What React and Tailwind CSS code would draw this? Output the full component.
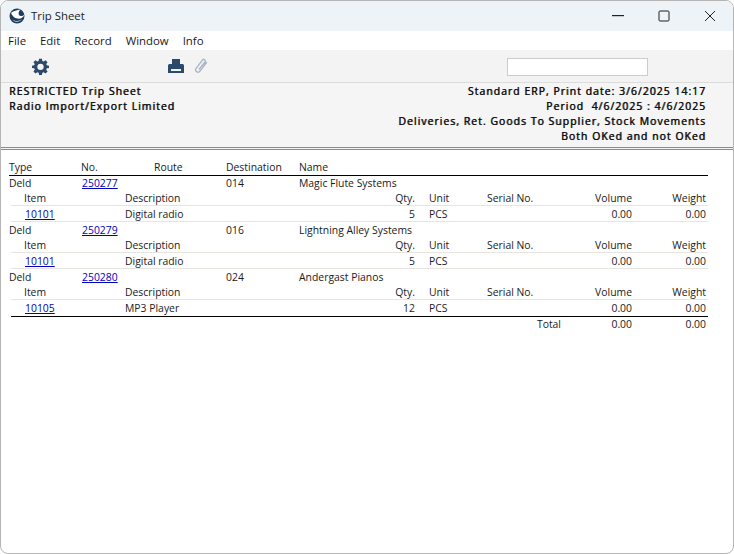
const F = { fontFamily: '"Open Sans", Tahoma, sans-serif' };

function Gear() {
  return (
    <svg width="17" height="17" viewBox="0 0 24 24" fill="#2b4a6b">
      <path fillRule="evenodd" d="M10 1h4l.6 3.1 1.9.8L19.1 3 22 5.900l-1.900 2.600.8 1.900L24 11v3l-3.100.6-.8 1.900 1.900 2.600L19.100 22l-2.600-1.900-1.900.8L14 24h-4l-.6-3.100-1.900-.8L4.900 22 2 19.100l1.900-2.600-.8-1.900L0 14v-3l3.100-.6.8-1.900L2 5.900 4.900 3l2.600 1.900 1.900-.8L10 1zm2 7a4.500 4.500 0 1 0 0 9 4.500 4.500 0 0 0 0-9z" />
    </svg>
  );
}

function Printer() {
  return (
    <svg width="16" height="15" viewBox="0 0 16 15" fill="#2b4a6b">
      <path d="M4 0h8v5H4z" />
      <path fillRule="evenodd" d="M1.500 5h13A1.500 1.500 0 0 1 16 6.500V14H0V6.500A1.500 1.500 0 0 1 1.500 5zM3 10v2h10v-2H3z" />
    </svg>
  );
}

function Clip() {
  return (
    <svg width="14" height="16" viewBox="0 0 14 16" fill="none" stroke="#aab5c4" strokeWidth="1.400" strokeLinecap="round">
      <path d="M12.500 4.500 6 13.200a2.400 2.400 0 0 1-3.900-2.800l6.300-8.300a1.600 1.600 0 0 1 2.600 1.900L5.300 11" />
    </svg>
  );
}

function Logo() {
  return (
    <svg width="16" height="16" viewBox="0 0 16 16">
      <circle cx="8" cy="8" r="7.500" fill="#1f3d5c" />
      <path d="M2 5C4.500 2.800 8 2.200 11.500 1.500 9.500 3.500 8.800 6 10.500 7.500c1.500 1 3.300.7 4.800-.7-.6 2.700-3.700 4.500-7 3.800C5.500 10 3.200 8 2 5z" fill="#ffffff" />
      <path d="M3 11.500c3 2 7 2 10-.2-2 3-7 3.500-10 .2z" fill="#c9d6e2" />
    </svg>
  );
}

function L({ children }) {
  return <span className="text-[#0000c0] underline">{children}</span>;
}

function Head({ a, b, c, d, e, link }) {
  return (
    <div className="grid h-[15.67px] grid-cols-[72px_73px_72px_73px_1fr] items-center whitespace-nowrap">
      <div>{a}</div>
      <div className={link ? "pl-px" : ""}>{link ? <L>{b}</L> : b}</div>
      <div>{c}</div>
      <div>{d}</div>
      <div>{e}</div>
    </div>
  );
}

function Line({ a, b, c, d, e, f, g, link, noBorder }) {
  return (
    <div className={`ml-[2px] grid h-[15.67px] grid-cols-[114px_233px_57px_14px_58px_87px_58px_74px] items-center whitespace-nowrap pr-[2px] ${noBorder ? "" : "border-b border-[#e8e4e0]"}`}>
      <div className={link ? "pl-[14px]" : "pl-[13px]"}>{link ? <L>{a}</L> : a}</div>
      <div>{b}</div>
      <div className="text-right">{c}</div>
      <div />
      <div>{d}</div>
      <div>{e}</div>
      <div className="text-right">{f}</div>
      <div className="text-right">{g}</div>
    </div>
  );
}

function Group({ no, dest, name, item, desc, qty, last }) {
  return (
    <div>
      <Head a="Deld" b={no} d={dest} e={name} link />
      <Line a="Item" b="Description" c="Qty." d="Unit" e="Serial No." f="Volume" g="Weight" />
      <Line a={item} b={desc} c={qty} d="PCS" f="0.00" g="0.00" link noBorder={last} />
    </div>
  );
}

const bold = "tracking-[1.05px] [text-shadow:0.6px_0_0_currentColor]";

export default function App() {
  return (
    <div style={F} className="flex h-[554px] w-[734px] flex-col overflow-hidden rounded-lg border border-[#b5b5b5] bg-white text-[10.4px] leading-none text-[#1a1a1a]">
      <div className="flex h-[30px] shrink-0 items-center bg-[#eef3f8] pl-[8px]">
        <Logo />
        <span className="ml-[6px] text-[11.4px] text-[#222]">Trip Sheet</span>
        <div className="ml-auto flex items-center pr-[17px]">
          <svg width="12" height="2" className="mr-[34px]"><rect width="12" height="1.200" fill="#222" /></svg>
          <svg width="12" height="12" className="mr-[34px]" fill="none" stroke="#222"><rect x="1" y="1" width="10" height="10" rx="1" /></svg>
          <svg width="12" height="12" fill="none" stroke="#222"><path d="M1 1l10 10M11 1L1 11" /></svg>
        </div>
      </div>
      <div className="flex h-[19px] shrink-0 items-center gap-[14px] bg-white pl-[7px] text-[11.4px] text-[#1a1a1a]">
        <span>File</span>
        <span>Edit</span>
        <span>Record</span>
        <span>Window</span>
        <span>Info</span>
      </div>
      <div className="flex h-[33px] shrink-0 items-center border-b border-[#dcdcdc] bg-[#f3f3f3] pl-[31px]">
        <Gear />
        <div className="ml-[119px] flex items-center gap-[10px]">
          <Printer />
          <Clip />
        </div>
        <div className="mt-[1px] ml-[299px] h-[18px] w-[141px] border border-[#cccccc] bg-white" />
      </div>
      <div className={`h-[65px] shrink-0 border-b border-[#8f8a86] bg-[#f5f5f5] px-[8px] pt-[1px] text-[#111] ${bold}`}>
        <div className="flex h-[15px] items-center justify-between pr-[19px]">
          <span>RESTRICTED Trip Sheet</span>
          <span>Standard ERP, Print date: 3/6/2025 14:17</span>
        </div>
        <div className="flex h-[15px] items-center justify-between pr-[19px]">
          <span>Radio Import/Export Limited</span>
          <span className="whitespace-pre">Period  4/6/2025 : 4/6/2025</span>
        </div>
        <div className="h-[15px] pr-[19px] text-right leading-[15px]">Deliveries, Ret. Goods To Supplier, Stock Movements</div>
        <div className="h-[15px] pr-[19px] text-right leading-[15px]">Both OKed and not OKed</div>
      </div>
      <div className="h-px shrink-0 bg-[#f5f5f5]" />
      <div className="flex-1 border-t border-[#8f8a86] pt-[9px] pr-[25px] pl-[8px]">
        <div className="border-b border-black">
          <Head a="Type" b="No." c="Route" d="Destination" e="Name" />
        </div>
        <div className="-mt-[0.5px]">
          <Group no="250277" dest="014" name="Magic Flute Systems" item="10101" desc="Digital radio" qty="5" />
          <Group no="250279" dest="016" name="Lightning Alley Systems" item="10101" desc="Digital radio" qty="5" />
          <Group no="250280" dest="024" name="Andergast Pianos" item="10105" desc="MP3 Player" qty="12" last />
        </div>
        <div className="ml-[2px] grid h-[16px] grid-cols-[550px_71px_74px] items-center border-t border-black pr-[2px]">
          <div className="text-right">Total</div>
          <div className="text-right">0.00</div>
          <div className="text-right">0.00</div>
        </div>
      </div>
    </div>
  );
}
